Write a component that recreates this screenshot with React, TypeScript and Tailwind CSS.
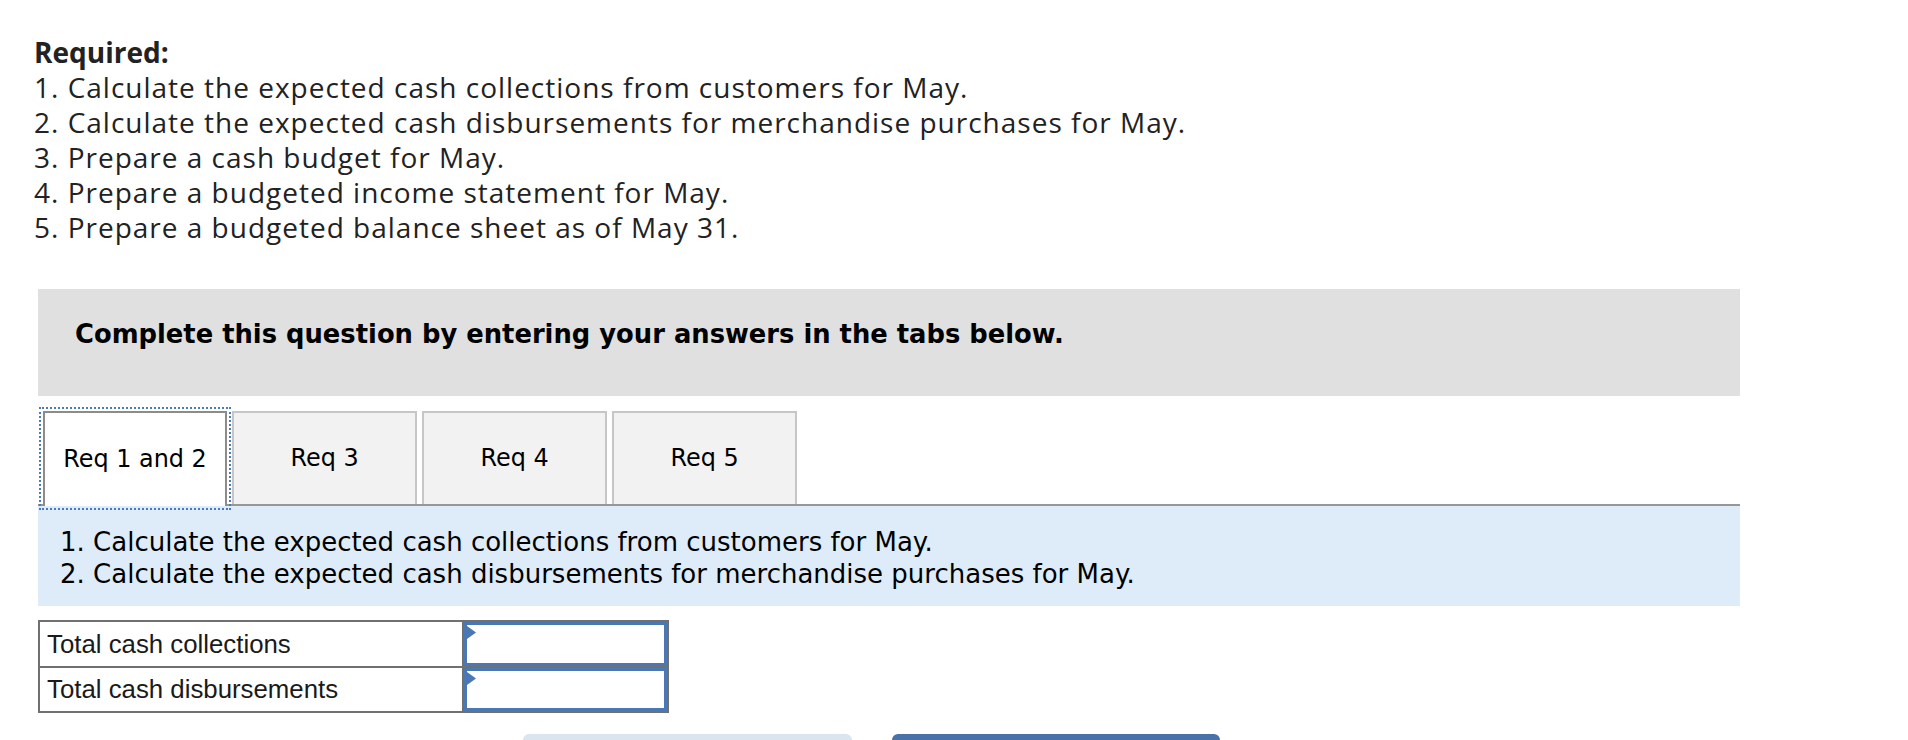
import React from "react"

const requiredLines = [
  "1. Calculate the expected cash collections from customers for May.",
  "2. Calculate the expected cash disbursements for merchandise purchases for May.",
  "3. Prepare a cash budget for May.",
  "4. Prepare a budgeted income statement for May.",
  "5. Prepare a budgeted balance sheet as of May 31.",
]

const tabs = ["Req 1 and 2", "Req 3", "Req 4", "Req 5"]

const rows = ["Total cash collections", "Total cash disbursements"]

const verdana = "font-['DejaVu_Sans','Verdana',sans-serif]"

const AnswerInput = () => (
  <div className="relative h-full w-full border-[3px] border-[#4a78b4] bg-white">
    <svg className="absolute left-0 top-[1px]" width="9" height="13" viewBox="0 0 9 13">
      <polygon points="0,0 9,6.5 0,13" fill="#4a78b4" />
    </svg>
  </div>
)

const App = () => {
  const active = 0

  return (
    <div className="relative h-[740px] w-[1908px] overflow-hidden bg-white">
      <div className="pl-[34px] pt-[35px] font-['Open_Sans',sans-serif] text-[28px] leading-[35px] text-[#222]">
        <p className="font-bold">Required:</p>
        {requiredLines.map((line) => (
          <p key={line} className="tracking-[1px]">
            {line}
          </p>
        ))}
      </div>

      <div className="ml-[38px] w-[1702px]">
        <div className={`mt-[44px] bg-[#e0e0e0] pb-[46px] pl-[37px] pt-[29px] ${verdana} text-[25.8px] font-bold leading-[32px] text-black`}>
          Complete this question by entering your answers in the tabs below.
        </div>

        <div className="mt-[15px] flex items-start gap-[5px] border-b-2 border-[#979797] pl-[5px]">
          {tabs.map((tab, i) =>
            i === active ? (
              <button
                key={tab}
                className={`relative z-10 -mb-[2px] flex h-[95px] w-[184px] items-center justify-center border-2 border-b-0 border-[#8c8c8c] bg-white ${verdana} text-[23.9px] text-black outline-2 outline-offset-2 outline-[#4a7ab8] outline-dotted`}
              >
                {tab}
              </button>
            ) : (
              <button
                key={tab}
                className={`flex h-[93px] w-[185px] items-center justify-center border-2 border-b-0 border-[#c6c6c6] bg-[#f2f2f2] ${verdana} text-[23.9px] text-black`}
              >
                {tab}
              </button>
            )
          )}
        </div>

        <div className={`bg-[#deecf9] pb-[16px] pl-[22px] pt-[20px] ${verdana} text-[26px] leading-[32px] text-black`}>
          <p>{requiredLines[0]}</p>
          <p>{requiredLines[1]}</p>
        </div>

        <div className="mt-[14px] grid w-[631px] grid-cols-[422px_203px] gap-[2px] bg-[#707070] p-[2px]">
          {rows.map((row, i) => (
            <React.Fragment key={row}>
              <div
                className={`flex ${i === 0 ? "h-[44px]" : "h-[43px]"} items-center bg-white pl-[7px] font-['Liberation_Sans',Arial,sans-serif] text-[25.8px] text-[#1a1a1a]`}
              >
                {row}
              </div>
              <div className={i === 0 ? "h-[44px]" : "h-[43px]"}>
                <AnswerInput />
              </div>
            </React.Fragment>
          ))}
        </div>
      </div>

      <div className="mt-[21px] flex gap-[40px] pl-[523px]">
        <button className="h-[50px] w-[329px] rounded-t-[6px] bg-[#dbe5f0]" />
        <button className="h-[50px] w-[328px] rounded-t-[6px] bg-[#4a72a8]" />
      </div>
    </div>
  )
}

export default App
